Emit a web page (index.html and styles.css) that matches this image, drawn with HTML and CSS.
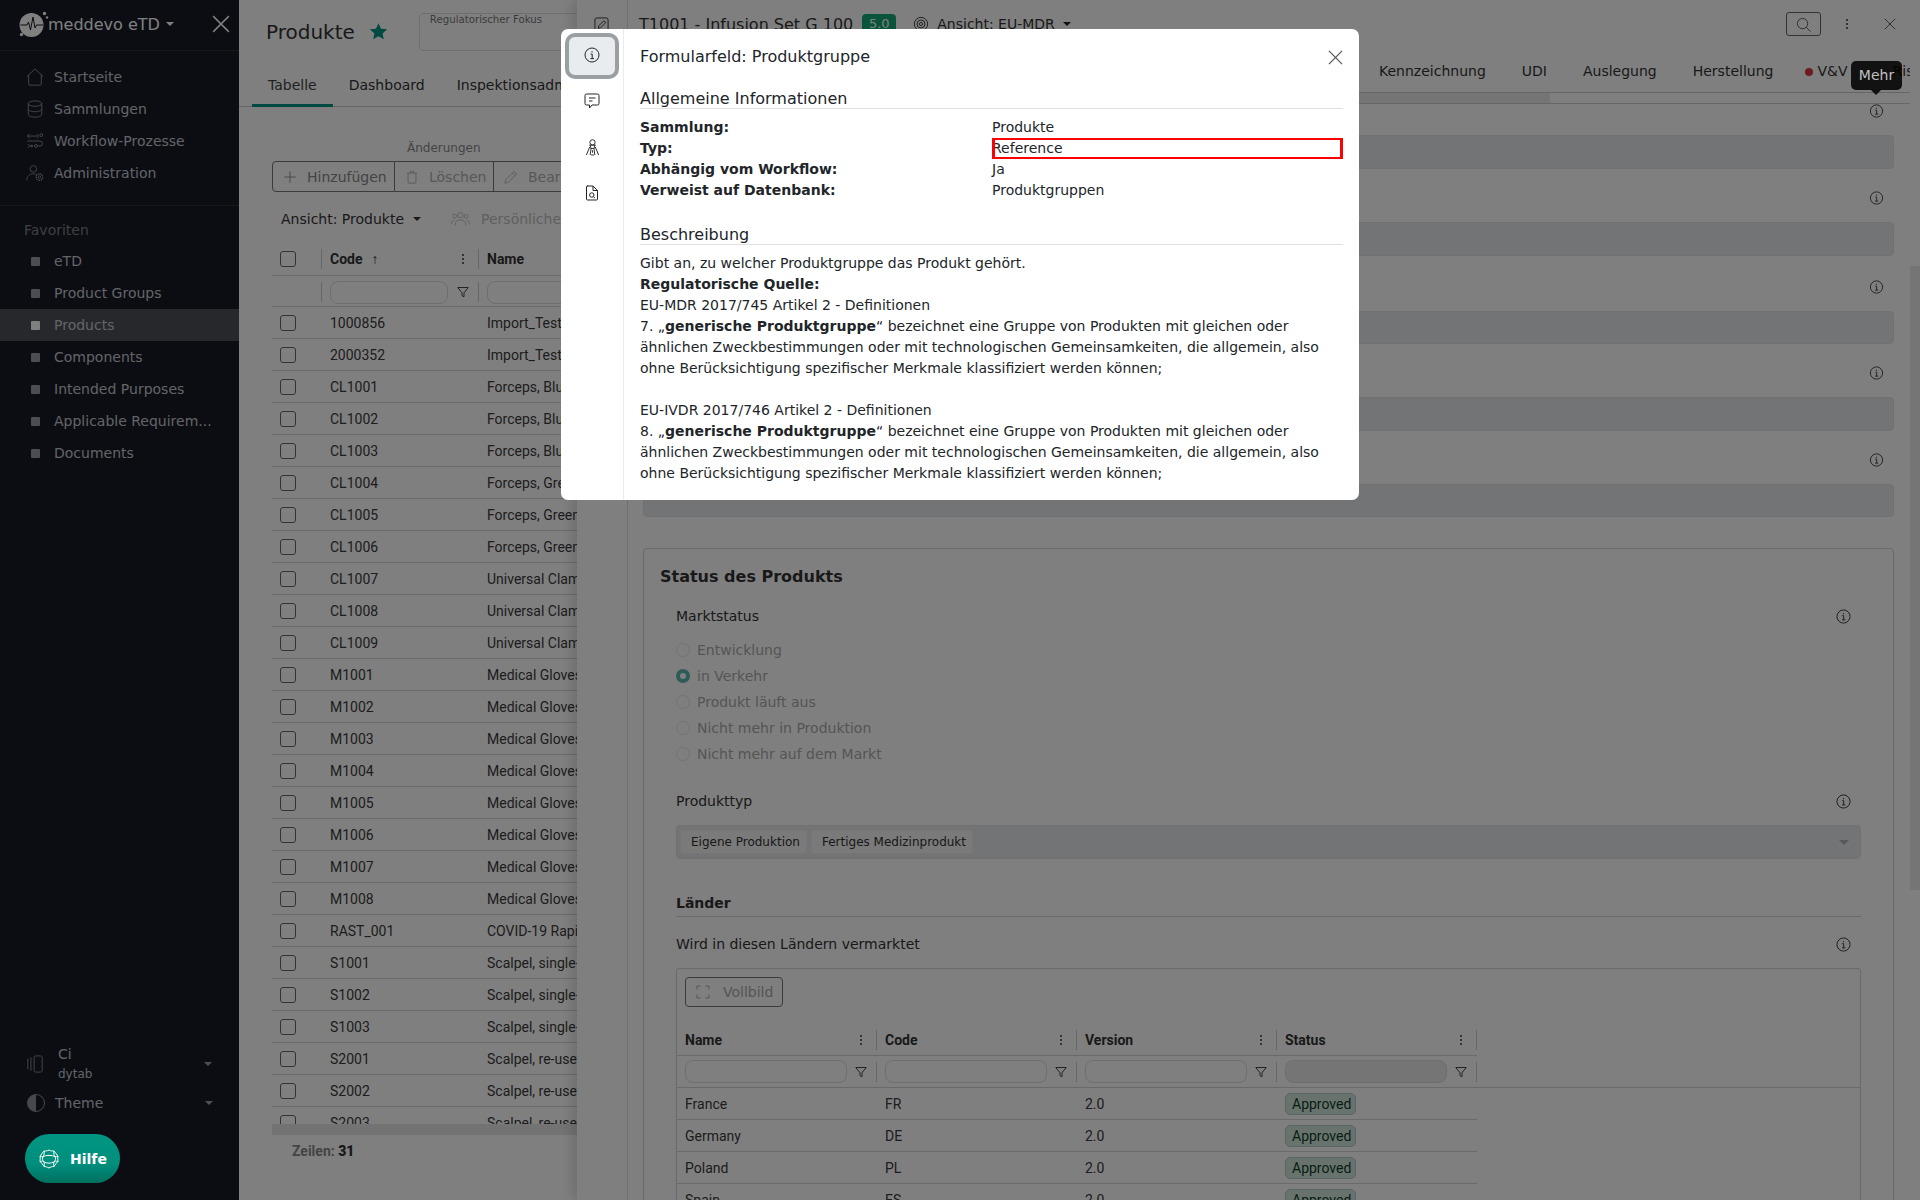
FILE: index.html
```html
<!DOCTYPE html>
<html lang="de">
<head>
<meta charset="UTF-8">
<title>Produkte - meddevo eTD</title>
<link rel="stylesheet" href="styles.css">
</head>
<body>
<svg class="sprite" aria-hidden="true">
  <symbol id="i-info" viewBox="0 0 16 16"><circle cx="8" cy="8" r="7"/><path d="M6.6 7.1H8.2V11.6M6.4 11.6H10"/><path d="M8 4.3v1.3"/></symbol>
  <symbol id="i-home" viewBox="0 0 20 20"><path d="M1 9.5 10 1l9 8.5M3 7.5V18a1 1 0 0 0 1 1h12a1 1 0 0 0 1-1V7.5"/></symbol>
  <symbol id="i-db" viewBox="0 0 20 20"><ellipse cx="10" cy="4" rx="7.5" ry="3"/><path d="M2.500 4v12c0 1.700 3.400 3 7.500 3s7.500-1.300 7.500-3V4M2.500 10c0 1.700 3.400 3 7.500 3s7.500-1.300 7.500-3"/></symbol>
  <symbol id="i-flow" viewBox="0 0 20 20"><path d="M2 4.500h10M4 2 1.500 4.500 4 7M12 2l2 2.500L12 7"/><circle cx="17" cy="3.500" r="1.600"/><path d="M1.500 10h14a2.500 2.500 0 0 1 0 5.500H13"/><circle cx="11" cy="15.500" r="1.600"/><path d="M2 13.500l2 2-2 2M6 15.500H4"/><circle cx="6.500" cy="15.500" r="1"/></symbol>
  <symbol id="i-admin" viewBox="0 0 22 20"><circle cx="9" cy="5" r="4"/><path d="M1 19c0-5 3-8 8-8 1.500 0 2.700.3 3.700.8"/><circle cx="16.500" cy="15" r="1.500"/><path stroke-dasharray="1.800 .9" stroke-width="1.500" d="M16.500 11a4 4 0 1 0 .01 0"/></symbol>
  <symbol id="i-side" viewBox="0 0 18 20"><path d="M1 4v12M4.500 2.500v15"/><rect x="8" y="1" width="9" height="18" rx="2"/></symbol>
  <symbol id="i-globe" viewBox="0 0 20 20"><path d="M10 1c2 1 3 1 5 1 1.500 2 3 3.500 4 5.500-.5 2 0 3.500 0 5-1.500 1.500-3 3-4 5-2 0-3.500.5-5 1.500-2-1-3.500-1.500-5-1.500-1-2-2.500-3.500-4-5 0-1.500.5-3 0-5C2 5.500 3.500 4 5 2c2 0 3 0 5-1Z"/><path d="M5 2c.5 3 0 4-1 5.500-1 .5-2 0-3 0M15 2c-.5 3 0 4 1 5.500 1 .5 2 0 3 0M1 12.500c2-.5 3-.5 4 .5 .5 1.500.5 3 0 4.500M19 12.500c-2-.5-3-.5-4 .5-.5 1.500-.5 3 0 4.500M4 7.500C7 6 13 6 16 7.500c1 2 .5 4-1 5.500-3 1.500-7 1.500-10 0C3.500 11.500 3 9.500 4 7.500Z"/></symbol>
  <symbol id="i-plus" viewBox="0 0 16 16"><path d="M8 1.500v13M1.500 8h13"/></symbol>
  <symbol id="i-trash" viewBox="0 0 16 16"><path d="M2 3.500h12M6 3.500V1.500h4v2M3.500 3.500V14a1 1 0 0 0 1 1h7a1 1 0 0 0 1-1V3.500"/></symbol>
  <symbol id="i-pen" viewBox="0 0 16 16"><path d="M11.500 1.500l3 3L5 14l-4 1 1-4 9.500-9.500ZM9.500 3.500l3 3"/></symbol>
  <symbol id="i-people" viewBox="0 0 20 16"><circle cx="10" cy="4" r="2.800"/><circle cx="4" cy="5" r="2"/><circle cx="16" cy="5" r="2"/><path d="M4.500 15v-2c0-2.500 2.500-4 5.500-4s5.500 1.500 5.500 4v2M.5 13c0-2 1-3.500 3-4M19.500 13c0-2-1-3.500-3-4"/></symbol>
  <symbol id="i-funnel" viewBox="0 0 12 12"><path d="M.8 1.500h10.400L7 6.800v4L5 9.600V6.800L.8 1.500Z"/></symbol>
  <symbol id="i-eye" viewBox="0 0 18 18"><circle cx="9" cy="9" r="7.500"/><circle cx="9" cy="9" r="4.500"/><circle cx="9" cy="9" r="1.800"/></symbol>
  <symbol id="i-edit" viewBox="0 0 16 16"><rect x="1" y="1" width="14" height="14" rx="2"/><path d="M10.500 4l2 2-5.500 5.500-2.500.5.500-2.500L10.500 4Z"/></symbol>
  <symbol id="i-search" viewBox="0 0 16 16"><circle cx="7" cy="7" r="5.500"/><path d="M11 11l4.500 4.500"/></symbol>
  <symbol id="i-x" viewBox="0 0 16 16"><path d="M1 1l14 14M15 1 1 15"/></symbol>
  <symbol id="i-chat" viewBox="0 0 16 16"><path d="M2.500 1h11A1.500 1.500 0 0 1 15 2.500v8a1.500 1.500 0 0 1-1.500 1.500H8l-2.500 3v-3h-3A1.500 1.500 0 0 1 1 10.500v-8A1.500 1.500 0 0 1 2.500 1Z"/><path d="M5 5h6.500M5 8h3.500"/></symbol>
  <symbol id="i-insp" viewBox="0 0 16 18"><circle cx="8" cy="3.500" r="2.800"/><path d="M4.500 6.500h7M5.700 6.500 6.200 10h3.600l.5-3.500M5 8.500 1.500 17M11 8.500l3.500 8.500M6.500 10 5.500 17M9.500 10l1 7M8 12v2.500M6.500 17h3"/></symbol>
  <symbol id="i-doc" viewBox="0 0 16 16"><path d="M3 1h6l4.500 4.500V14a1 1 0 0 1-1 1h-9a1 1 0 0 1-1-1V2a1 1 0 0 1 1-1ZM9 1v4.500h4.500"/><circle cx="7.800" cy="10" r="2.200"/><path d="M9.400 11.600l1.600 1.600"/></symbol>
  <symbol id="i-full" viewBox="0 0 14 14"><path d="M1 4.500V1h3.500M9.500 1H13v3.500M13 9.500V13H9.500M4.500 13H1V9.500"/></symbol>
</svg>

<div class="app">
  <aside class="sidebar">
    <div class="brand">
      <svg class="logo" viewBox="0 0 30 26"><circle class="logo-disc" cx="12.500" cy="14" r="12"/><path class="logo-pulse" d="M1.500 14h6.500l1.500-3 2 8 2.500-13 2 11 1.500-3h6.500"/><circle class="logo-dot" cx="25.500" cy="2.500" r="1.700"/><circle class="logo-dot" cx="28" cy="6.500" r="1.200"/><circle class="logo-dot" cx="2.500" cy="23.500" r="1.700"/></svg>
      <span class="brand-name">meddevo eTD</span>
      <span class="caret"></span>
      <svg class="brand-x"><use href="#i-x"/></svg>
    </div>
    <nav class="nav">
      <a class="nav-item"><svg class="nav-ico"><use href="#i-home"/></svg>Startseite</a>
      <a class="nav-item"><svg class="nav-ico"><use href="#i-db"/></svg>Sammlungen</a>
      <a class="nav-item"><svg class="nav-ico"><use href="#i-flow"/></svg>Workflow-Prozesse</a>
      <a class="nav-item"><svg class="nav-ico"><use href="#i-admin"/></svg>Administration</a>
    </nav>
    <div class="fav-title">Favoriten</div>
    <div class="favs">
      <a class="fav"><i></i>eTD</a>
      <a class="fav"><i></i>Product Groups</a>
      <a class="fav active"><i></i>Products</a>
      <a class="fav"><i></i>Components</a>
      <a class="fav"><i></i>Intended Purposes</a>
      <a class="fav"><i></i>Applicable Requirem...</a>
      <a class="fav"><i></i>Documents</a>
    </div>
    <div class="side-foot">
      <div class="user">
        <svg class="nav-ico"><use href="#i-side"/></svg>
        <div class="user-text"><div class="user-name">Ci</div><div class="user-org">dytab</div></div>
        <span class="caret"></span>
      </div>
      <div class="theme">
        <span class="theme-ico"></span>
        <span class="theme-name">Theme</span>
        <span class="caret"></span>
      </div>
    </div>
  </aside>

  <main class="main">
    <div class="page-head">
      <h1 class="page-title">Produkte</h1>
      <svg class="star" viewBox="0 0 24 24"><path d="M12 1.500l3.200 7 7.600.8-5.700 5.100 1.600 7.500-6.700-3.900-6.700 3.900 1.600-7.500L1.200 9.300l7.600-.8z"/></svg>
      <div class="focus-box">Regulatorischer Fokus</div>
    </div>
    <div class="tabs">
      <a class="tab active">Tabelle</a>
      <a class="tab">Dashboard</a>
      <a class="tab">Inspektionsadministration</a>
    </div>
    <div class="tool-label">Änderungen</div>
    <div class="btn-group">
      <button class="seg seg-on"><svg><use href="#i-plus"/></svg>Hinzufügen</button>
      <button class="seg"><svg><use href="#i-trash"/></svg>Löschen</button>
      <button class="seg seg-last"><svg><use href="#i-pen"/></svg>Bearbeiten</button>
    </div>
    <div class="view-row">
      <span class="view-name">Ansicht: Produkte</span><span class="caret"></span>
      <svg class="people"><use href="#i-people"/></svg>
      <span class="view-own">Persönliche Ansicht</span>
    </div>
    <div class="grid">
      <div class="g-row g-head">
        <div class="g-check"><span class="check"></span></div>
        <div class="g-cell">Code <span class="sort">↑</span><span class="dots"></span></div>
        <div class="g-cell">Name</div>
      </div>
      <div class="g-row g-filter">
        <div class="g-check"></div>
        <div class="g-cell"><span class="g-input"></span><svg class="funnel"><use href="#i-funnel"/></svg></div>
        <div class="g-cell"><span class="g-input"></span></div>
      </div>
      <div class="g-body">
        <div class="g-row"><div class="g-check"><span class="check"></span></div><div class="g-cell">1000856</div><div class="g-cell">Import_Test_Product</div></div>
        <div class="g-row"><div class="g-check"><span class="check"></span></div><div class="g-cell">2000352</div><div class="g-cell">Import_Test_Product</div></div>
        <div class="g-row"><div class="g-check"><span class="check"></span></div><div class="g-cell">CL1001</div><div class="g-cell">Forceps, Blue</div></div>
        <div class="g-row"><div class="g-check"><span class="check"></span></div><div class="g-cell">CL1002</div><div class="g-cell">Forceps, Blue</div></div>
        <div class="g-row"><div class="g-check"><span class="check"></span></div><div class="g-cell">CL1003</div><div class="g-cell">Forceps, Blue</div></div>
        <div class="g-row"><div class="g-check"><span class="check"></span></div><div class="g-cell">CL1004</div><div class="g-cell">Forceps, Green</div></div>
        <div class="g-row"><div class="g-check"><span class="check"></span></div><div class="g-cell">CL1005</div><div class="g-cell">Forceps, Green</div></div>
        <div class="g-row"><div class="g-check"><span class="check"></span></div><div class="g-cell">CL1006</div><div class="g-cell">Forceps, Green</div></div>
        <div class="g-row"><div class="g-check"><span class="check"></span></div><div class="g-cell">CL1007</div><div class="g-cell">Universal Clamp</div></div>
        <div class="g-row"><div class="g-check"><span class="check"></span></div><div class="g-cell">CL1008</div><div class="g-cell">Universal Clamp</div></div>
        <div class="g-row"><div class="g-check"><span class="check"></span></div><div class="g-cell">CL1009</div><div class="g-cell">Universal Clamp</div></div>
        <div class="g-row"><div class="g-check"><span class="check"></span></div><div class="g-cell">M1001</div><div class="g-cell">Medical Gloves</div></div>
        <div class="g-row"><div class="g-check"><span class="check"></span></div><div class="g-cell">M1002</div><div class="g-cell">Medical Gloves</div></div>
        <div class="g-row"><div class="g-check"><span class="check"></span></div><div class="g-cell">M1003</div><div class="g-cell">Medical Gloves</div></div>
        <div class="g-row"><div class="g-check"><span class="check"></span></div><div class="g-cell">M1004</div><div class="g-cell">Medical Gloves</div></div>
        <div class="g-row"><div class="g-check"><span class="check"></span></div><div class="g-cell">M1005</div><div class="g-cell">Medical Gloves</div></div>
        <div class="g-row"><div class="g-check"><span class="check"></span></div><div class="g-cell">M1006</div><div class="g-cell">Medical Gloves</div></div>
        <div class="g-row"><div class="g-check"><span class="check"></span></div><div class="g-cell">M1007</div><div class="g-cell">Medical Gloves</div></div>
        <div class="g-row"><div class="g-check"><span class="check"></span></div><div class="g-cell">M1008</div><div class="g-cell">Medical Gloves</div></div>
        <div class="g-row"><div class="g-check"><span class="check"></span></div><div class="g-cell">RAST_001</div><div class="g-cell">COVID-19 Rapid Test</div></div>
        <div class="g-row"><div class="g-check"><span class="check"></span></div><div class="g-cell">S1001</div><div class="g-cell">Scalpel, single-use</div></div>
        <div class="g-row"><div class="g-check"><span class="check"></span></div><div class="g-cell">S1002</div><div class="g-cell">Scalpel, single-use</div></div>
        <div class="g-row"><div class="g-check"><span class="check"></span></div><div class="g-cell">S1003</div><div class="g-cell">Scalpel, single-use</div></div>
        <div class="g-row"><div class="g-check"><span class="check"></span></div><div class="g-cell">S2001</div><div class="g-cell">Scalpel, re-use</div></div>
        <div class="g-row"><div class="g-check"><span class="check"></span></div><div class="g-cell">S2002</div><div class="g-cell">Scalpel, re-use</div></div>
        <div class="g-row"><div class="g-check"><span class="check"></span></div><div class="g-cell">S2003</div><div class="g-cell">Scalpel, re-use</div></div>
      </div>
      <div class="g-scroll"></div>
      <div class="g-foot"><span>Zeilen:</span> <b>31</b></div>
    </div>
  </main>
</div>

<!-- detail drawer, slides in over the table -->
<section class="drawer">
  <div class="rail"><svg class="rail-edit"><use href="#i-edit"/></svg></div>
  <div class="drawer-main">
    <div class="drawer-head">
      <span class="drawer-title">T1001 - Infusion Set G 100</span>
      <span class="version">5.0</span>
      <svg class="eye"><use href="#i-eye"/></svg>
      <span class="drawer-view">Ansicht: EU-MDR</span><span class="caret"></span>
      <span class="search-btn"><svg><use href="#i-search"/></svg></span>
      <span class="dots head-dots"></span>
      <svg class="head-x"><use href="#i-x"/></svg>
    </div>
    <div class="d-tabs">
      <a>Kennzeichnung</a><a>UDI</a><a>Auslegung</a><a>Herstellung</a><a class="d-tab-vv"><i></i>V&amp;V</a><a class="d-tab-more">Risiko</a>
    </div>
    <div class="d-hscroll"><div class="d-hthumb"></div></div>
    <div class="d-body">
      <div class="form">
        <div class="field"><svg class="info"><use href="#i-info"/></svg><div class="ro-input"></div></div>
        <div class="field"><svg class="info"><use href="#i-info"/></svg><div class="ro-input"></div></div>
        <div class="field"><svg class="info"><use href="#i-info"/></svg><div class="ro-input"></div></div>
        <div class="field"><svg class="info"><use href="#i-info"/></svg><div class="ro-input"></div></div>
        <div class="field"><svg class="info"><use href="#i-info"/></svg><div class="ro-input"></div></div>

        <div class="card">
          <h2 class="card-title">Status des Produkts</h2>
          <div class="card-body">
            <div class="lbl-row"><span>Marktstatus</span><svg class="info"><use href="#i-info"/></svg></div>
            <div class="radios">
              <div class="radio"><i></i>Entwicklung</div>
              <div class="radio on"><i></i>in Verkehr</div>
              <div class="radio"><i></i>Produkt läuft aus</div>
              <div class="radio"><i></i>Nicht mehr in Produktion</div>
              <div class="radio"><i></i>Nicht mehr auf dem Markt</div>
            </div>
            <div class="lbl-row lbl-type"><span>Produkttyp</span><svg class="info"><use href="#i-info"/></svg></div>
            <div class="multi">
              <span class="chip">Eigene Produktion</span>
              <span class="chip">Fertiges Medizinprodukt</span>
              <span class="caret multi-caret"></span>
            </div>
            <div class="sub-title">Länder</div>
            <div class="lbl-row lbl-land"><span>Wird in diesen Ländern vermarktet</span><svg class="info"><use href="#i-info"/></svg></div>
            <div class="sub-grid">
              <button class="full-btn"><svg><use href="#i-full"/></svg>Vollbild</button>
              <div class="s-row s-head">
                <div>Name<span class="dots"></span></div><div>Code<span class="dots"></span></div><div>Version<span class="dots"></span></div><div>Status<span class="dots"></span></div>
              </div>
              <div class="s-row s-filter">
                <div><span class="g-input"></span><svg class="funnel"><use href="#i-funnel"/></svg></div>
                <div><span class="g-input"></span><svg class="funnel"><use href="#i-funnel"/></svg></div>
                <div><span class="g-input"></span><svg class="funnel"><use href="#i-funnel"/></svg></div>
                <div><span class="g-input off"></span><svg class="funnel"><use href="#i-funnel"/></svg></div>
              </div>
              <div class="s-row"><div>France</div><div>FR</div><div>2.0</div><div><span class="ok">Approved</span></div></div>
              <div class="s-row"><div>Germany</div><div>DE</div><div>2.0</div><div><span class="ok">Approved</span></div></div>
              <div class="s-row"><div>Poland</div><div>PL</div><div>2.0</div><div><span class="ok">Approved</span></div></div>
              <div class="s-row"><div>Spain</div><div>ES</div><div>2.0</div><div><span class="ok">Approved</span></div></div>
            </div>
          </div>
        </div>
      </div>
      <div class="d-vscroll"><div class="d-vthumb"></div></div>
    </div>
  </div>
</section>

<div class="backdrop"></div>

<div class="tooltip">Mehr</div>

<a class="help"><svg><use href="#i-globe"/></svg>Hilfe</a>

<div class="modal">
  <div class="m-rail">
    <span class="m-btn active"><svg><use href="#i-info"/></svg></span>
    <span class="m-btn"><svg><use href="#i-chat"/></svg></span>
    <span class="m-btn"><svg class="m-insp"><use href="#i-insp"/></svg></span>
    <span class="m-btn"><svg><use href="#i-doc"/></svg></span>
  </div>
  <div class="m-main">
    <div class="m-head">
      <h3 class="m-title">Formularfeld: Produktgruppe</h3>
      <svg class="m-x"><use href="#i-x"/></svg>
    </div>
    <h4 class="m-sec">Allgemeine Informationen</h4>
    <dl class="m-facts">
      <dt>Sammlung:</dt><dd>Produkte</dd>
      <dt>Typ:</dt><dd class="marked">Reference</dd>
      <dt>Abhängig vom Workflow:</dt><dd>Ja</dd>
      <dt>Verweist auf Datenbank:</dt><dd>Produktgruppen</dd>
    </dl>
    <h4 class="m-sec m-sec-desc">Beschreibung</h4>
    <div class="m-desc">
      Gibt an, zu welcher Produktgruppe das Produkt gehört.<br>
      <b>Regulatorische Quelle:</b><br>
      EU-MDR 2017/745 Artikel 2 - Definitionen<br>
      7. „<b>generische Produktgruppe</b>“ bezeichnet eine Gruppe von Produkten mit gleichen oder ähnlichen Zweckbestimmungen oder mit technologischen Gemeinsamkeiten, die allgemein, also ohne Berücksichtigung spezifischer Merkmale klassifiziert werden können;<br>
      <br>
      EU-IVDR 2017/746 Artikel 2 - Definitionen<br>
      8. „<b>generische Produktgruppe</b>“ bezeichnet eine Gruppe von Produkten mit gleichen oder ähnlichen Zweckbestimmungen oder mit technologischen Gemeinsamkeiten, die allgemein, also ohne Berücksichtigung spezifischer Merkmale klassifiziert werden können;
    </div>
  </div>
</div>
</body>
</html>
```
FILE: styles.css
```css
:root {
  font-family: "DejaVu Sans", sans-serif;
  font-size: 14px;
  color: #212529;
}
* {
  box-sizing: border-box;
}
html, body {
  margin: 0;
  height: 1200px;
  overflow: hidden;
  background: #fff;
}
h1, h2, h3, h4, dl, dd {
  margin: 0;
  font-weight: normal;
}
button {
  font: inherit;
  background: none;
}
svg {
  fill: none;
  stroke: currentColor;
  stroke-width: 1;
}
.sprite {
  width: 0;
  height: 0;
  display: block;
}
.caret {
  display: inline-block;
  width: 0;
  height: 0;
  border: 4.500px solid transparent;
  border-top-color: currentColor;
  border-bottom: 0;
}
.dots {
  width: 2px;
  height: 2px;
  border-radius: 50%;
  background: #333;
  box-shadow: 0 -4px 0 #333, 0 4px 0 #333;
  display: inline-block;
}

.app {
  display: flex;
  height: 1200px;
}

/* sidebar */
.sidebar {
  width: 239px;
  flex: none;
  background: #161a26;
  color: #c4c8d0;
  display: flex;
  flex-direction: column;
}
.brand {
  height: 51px;
  border-bottom: 1px solid #2c3038;
  display: flex;
  align-items: center;
  padding: 0 9px 2px 19px;
  color: #fff;
}
.logo {
  width: 30px;
  height: 26px;
  margin-right: -1px;
  flex: none;
}
.logo-disc { fill: #fff; stroke: none; }
.logo-pulse { stroke: #161a26; stroke-width: 1; }
.logo-dot { fill: #fff; stroke: none; }
.brand-name {
  font-size: 16px;
  color: #fff;
  margin-left: 0;
}
.brand .caret {
  margin-left: 6px;
  border-width: 4px;
  border-bottom: 0;
}
.brand-x {
  width: 18px;
  height: 18px;
  margin-left: auto;
  stroke-width: 1.300;
}
.nav {
  padding: 10px 0 16px;
  border-bottom: 1px solid #2c3038;
}
.nav-item {
  height: 32px;
  display: flex;
  align-items: center;
  padding-left: 26px;
  gap: 10px;
}
.nav-ico {
  width: 18px;
  height: 18px;
  flex: none;
  color: #9096a0;
}
.fav-title {
  margin: 14px 0 5px 24px;
  line-height: 20px;
  color: #7c8088;
}
.fav {
  height: 32px;
  display: flex;
  align-items: center;
  padding-left: 31px;
  gap: 14px;
}
.fav i {
  width: 9px;
  height: 9px;
  border-radius: 1px;
  background: #959aa5;
}
.fav.active {
  background: #4e5157;
}
.fav.active i {
  background: #fff;
}
.side-foot {
  margin-top: auto;
  padding: 0 0 81px 26px;
}
.user {
  height: 40px;
  display: flex;
  align-items: center;
  padding-right: 27px;
}
.user .caret, .theme .caret {
  margin-left: auto;
  color: #9da1a8;
}
.user-text {
  margin-left: 14px;
}
.user-name {
  font-size: 14px;
  line-height: 20px;
}
.user-org {
  font-size: 12px;
  line-height: 20px;
}
.theme {
  margin-top: 3px;
  height: 32px;
  display: flex;
  align-items: center;
  padding-right: 26px;
}
.theme-ico {
  width: 18px;
  height: 18px;
  margin-left: 1px;
  border-radius: 50%;
  border: 1.500px solid #8d919b;
  background: linear-gradient(90deg, #8d919b 50%, transparent 50%);
}
.theme-name {
  margin-left: 10px;
}

/* table page */
.main {
  flex: 1;
  min-width: 0;
  overflow: hidden;
}
.page-head {
  display: flex;
  align-items: flex-start;
  padding: 13px 0 0 27px;
  height: 66px;
}
.page-title {
  font-size: 20px;
  line-height: 38px;
  color: #333;
}
.star {
  width: 19px;
  height: 19px;
  margin: 9px 0 0 14px;
  fill: #009485;
  stroke: none;
}
.focus-box {
  width: 210px;
  flex: none;
  height: 38px;
  margin-left: 31px;
  border: 1px solid #dadde2;
  border-radius: 5px;
  padding: 0 0 0 10px;
  font-size: 10.200px;
  line-height: 12px;
  color: #777;
}
.tabs {
  display: flex;
  padding-left: 13px;
  height: 41px;
  width: 800px;
  border-bottom: 1px solid #ccc;
}
.tab {
  padding: 10px 16px 0;
  line-height: 18px;
  height: 41px;
  color: #333;
  white-space: nowrap;
}
.tab.active {
  border-bottom: 3px solid #009485;
  color: #444;
}
.tool-label {
  margin: 33px 0 0 168px;
  font-size: 12px;
  line-height: 16px;
  color: #888;
}
.btn-group {
  margin: 5px 0 0 33px;
  display: flex;
  height: 31px;
}
.seg {
  border: 1px solid #777;
  border-left: 0;
  display: flex;
  align-items: center;
  gap: 10px;
  padding: 0 0 0 10px;
  color: #b0b0b0;
  white-space: nowrap;
  flex: none;
  width: 99px;
}
.seg svg {
  width: 14px;
  height: 16px;
  flex: none;
}
.seg-on {
  width: 123px;
  border-left: 1px solid #777;
  border-radius: 4px 0 0 4px;
  color: #888;
}
.seg-last {
  width: 130px;
}
.view-row {
  margin: 17px 0 0 42px;
  height: 20px;
  display: flex;
  align-items: center;
  width: 400px;
  color: #333;
}
.view-row .caret {
  margin-left: 9px;
}
.people {
  width: 19px;
  height: 16px;
  margin-left: 30px;
  color: #c0c0c0;
}
.view-own {
  margin-left: 11px;
  color: #c0c0c0;
  white-space: nowrap;
}
.grid {
  margin: 16px 0 0 33px;
  font-family: Roboto, sans-serif;
  width: 540px;
}
.g-row {
  height: 32px;
  display: grid;
  grid-template-columns: 50px 157px 1fr;
  align-items: center;
  border-bottom: 1px solid #d4d4d4;
  color: #3a3a3a;
}
.g-head {
  height: 31px;
  padding-bottom: 2px;
  font-weight: bold;
  color: #333;
}
.g-filter {
  height: 31px;
  padding-top: 2px;
}
.g-check {
  padding-left: 8px;
  height: 100%;
  display: flex;
  align-items: center;
  border-right: 1px solid transparent;
}
.g-head .g-check, .g-filter .g-check {
  height: 20px;
  border-right-color: #ccc;
}
.check {
  width: 16px;
  height: 16px;
  border: 1px solid #666;
  border-radius: 3px;
  background: #fff;
}
.g-cell {
  padding-left: 8px;
  display: flex;
  align-items: center;
  white-space: nowrap;
}
.g-head .g-cell:nth-child(2), .g-filter .g-cell:nth-child(2) {
  height: 20px;
  border-right: 1px solid #ccc;
}
.sort {
  margin-left: 9px;
  font-size: 14px;
}
.g-head .dots {
  margin-left: auto;
  margin-right: 14px;
}
.g-input {
  display: block;
  width: 118px;
  height: 23px;
  flex: none;
  border: 1px solid #dcdcdc;
  border-radius: 8px;
  background: #fff;
}
.funnel {
  width: 12px;
  height: 12px;
  margin-left: 9px;
  flex: none;
  color: #333;
  stroke-width: .9;
}
.g-body {
  height: 817px;
  overflow: hidden;
}
.g-scroll {
  height: 11px;
  background: #e6e6e6;
}
.g-foot {
  padding: 7px 0 0 20px;
  line-height: 18px;
  font-weight: bold;
  color: #333;
}
.g-foot span {
  color: #888;
}

/* drawer */
.drawer {
  position: absolute;
  left: 577px;
  top: 0;
  right: 0;
  bottom: 0;
  background: #fff;
  display: flex;
  box-shadow: -6px 0 10px rgba(0, 0, 0, .12);
  overflow: hidden;
}
.rail {
  width: 51px;
  flex: none;
  border-right: 1px solid #ddd;
  padding: 17px 0 0 17px;
}
.rail-edit {
  width: 15px;
  height: 15px;
  color: #333;
}
.drawer-main {
  flex: 1;
  min-width: 0;
  display: flex;
  flex-direction: column;
}
.drawer-head {
  height: 48px;
  flex: none;
  display: flex;
  align-items: center;
  padding-left: 11px;
}
.drawer-title {
  font-size: 16px;
  color: #333;
}
.version {
  margin-left: 9px;
  width: 34px;
  height: 20px;
  border-radius: 4px;
  background: #16a878;
  color: #fff;
  font-size: 13px;
  text-align: center;
  line-height: 20px;
}
.eye {
  width: 16px;
  height: 16px;
  margin-left: 17px;
  color: #333;
}
.drawer-view {
  margin-left: 8px;
  color: #333;
}
.drawer-head .caret {
  margin-left: 8px;
  border-width: 4px;
  border-bottom: 0;
}
.search-btn {
  margin-left: auto;
  width: 35px;
  height: 24px;
  border: 1px solid #666;
  border-radius: 3px;
  display: flex;
  align-items: center;
  justify-content: center;
  color: #555;
}
.search-btn svg {
  width: 15px;
  height: 15px;
}
.head-dots {
  margin-left: 25px;
}
.head-x {
  width: 12px;
  height: 12px;
  margin: 0 24px 0 36px;
  color: #333;
}
.d-tabs {
  height: 45px;
  width: 1282px;
  flex: none;
  display: flex;
  gap: 36px;
  align-items: center;
  padding: 2px 0 0 751px;
  border-bottom: 1px solid #ccc;
  color: #333;
  overflow: hidden;
  white-space: nowrap;
}
.d-tab-more {
  margin-left: 9px;
}
.d-tab-vv i {
  display: inline-block;
  width: 8px;
  height: 8px;
  border-radius: 50%;
  background: #dc3545;
  margin-right: 4px;
}
.d-tab-vv {
  margin-left: -4px;
}
.d-hscroll {
  height: 11px;
  width: 1282px;
  flex: none;
  border-bottom: 1px solid #ccc;
}
.d-hthumb {
  width: 922px;
  height: 10px;
  background: #eaeaea;
}
.d-body {
  flex: 1;
  min-height: 0;
  display: flex;
  overflow: hidden;
}
.form {
  width: 1282px;
  flex: none;
  padding: 0 16px 0 15px;
}
.d-vscroll {
  flex: 1;
}
.d-vthumb {
  margin-top: 162px;
  height: 624px;
  background: #ebebeb;
}
.field {
  margin-bottom: 22px;
  display: flex;
  flex-direction: column;
}
.field:nth-child(2) {
  margin-bottom: 24px;
}
.field:nth-child(3) .ro-input, .field:nth-child(5) .ro-input {
  height: 33px;
}
.info {
  width: 15px;
  height: 15px;
  flex: none;
  color: #333;
}
.field .info {
  align-self: flex-end;
  margin-right: 10px;
  height: 14px;
}
.ro-input {
  margin-top: 17px;
  height: 34px;
  border: 1px solid #dee2e6;
  border-radius: 4px;
  background: #e7e9ec;
}
.field:nth-child(5) {
  margin-bottom: 31px;
}
.card {
  border: 1px solid #d4d4d4;
  border-radius: 4px 4px 0 0;
  padding: 16px 32px 0 16px;
  height: 800px;
}
.card-title {
  font-size: 16px;
  line-height: 24px;
  font-weight: bold;
  color: #333;
}
.card-body {
  padding-left: 16px;
}
.lbl-row {
  margin-top: 17px;
  height: 20px;
  display: flex;
  align-items: center;
  justify-content: space-between;
  color: #333;
}
.lbl-row .info {
  margin-right: 10px;
}
.radios {
  margin-top: 11px;
}
.radio {
  height: 26px;
  display: flex;
  align-items: center;
  color: #aaa;
  gap: 7px;
}
.radio i {
  width: 14px;
  height: 14px;
  border-radius: 50%;
  border: 1px solid #e4e6e8;
  background: #fff;
}
.radio.on i {
  border: 4px solid #5bb8ad;
}
.lbl-type {
  margin-top: 24px;
}
.multi {
  margin-top: 14px;
  height: 34px;
  border: 1px solid #dee2e6;
  border-radius: 4px;
  background: #e7e9ec;
  display: flex;
  align-items: center;
  gap: 4px;
  padding: 0 11px 0 3px;
}
.chip {
  height: 24px;
  line-height: 22px;
  padding: 0 6px 0 10px;
  border: 1px solid #ebebeb;
  border-radius: 2px;
  background: #f5f5f5;
  font-size: 12px;
  color: #333;
}
.multi-caret {
  margin-left: auto;
  color: #b0b0b0;
  border-width: 5px 5.500px 0;
}
.sub-title {
  margin-top: 34px;
  line-height: 20px;
  padding-bottom: 3px;
  border-bottom: 1px solid #d4d4d4;
  font-weight: bold;
  color: #333;
}
.lbl-land {
  margin-top: 17px;
}
.sub-grid {
  margin-top: 14px;
  border: 1px solid #d4d4d4;
  border-radius: 3px 3px 0 0;
  padding-top: 8px;
  font-family: Roboto, sans-serif;
  color: #3a3a3a;
}
.full-btn {
  font-family: "DejaVu Sans", sans-serif;
  margin-left: 8px;
  width: 98px;
  height: 30px;
  border: 1px solid #777;
  border-radius: 4px;
  color: #aaa;
  display: flex;
  align-items: center;
  gap: 13px;
  padding: 0 0 0 10px;
}
.full-btn svg {
  width: 14px;
  height: 14px;
}
.s-row {
  width: 800px;
  height: 32px;
  display: grid;
  grid-template-columns: repeat(4, 200px);
  align-items: center;
  border-bottom: 1px solid #d4d4d4;
}
.s-row > div {
  padding-left: 8px;
  display: flex;
  align-items: center;
}
.s-head {
  margin-top: 17px;
  font-weight: bold;
  color: #333;
}
.s-head > div, .s-filter > div {
  height: 20px;
  border-right: 1px solid #ccc;
}
.s-head .dots {
  margin-left: auto;
  margin-right: 14px;
}
.s-filter {
  width: 100%;
  grid-template-columns: repeat(4, 200px) 1fr;
}
.s-filter .g-input {
  width: 162px;
}
.s-filter .funnel {
  margin-left: 8px;
}
.g-input.off {
  background: #ebebeb;
}
.ok {
  height: 22px;
  width: 71px;
  line-height: 20px;
  padding-left: 6px;
  border: 1px solid #b4cfbf;
  border-radius: 5px;
  background: #d1e7dd;
  color: #0f3d2a;
}

/* over the content */
.backdrop {
  position: absolute;
  left: 0;
  top: 0;
  right: 0;
  bottom: 0;
  background: rgba(0, 0, 0, .5);
}
.tooltip {
  position: absolute;
  left: 1851px;
  top: 61px;
  width: 51px;
  height: 29px;
  border-radius: 5px;
  background: #000;
  opacity: .85;
  color: #ccc;
  text-align: center;
  line-height: 29px;
}
.tooltip::after {
  content: "";
  position: absolute;
  left: 20px;
  top: 29px;
  border: 5px solid transparent;
  border-top-color: #000;
  border-bottom: 0;
}
.help {
  position: absolute;
  left: 25px;
  top: 1134px;
  width: 95px;
  height: 49px;
  border-radius: 25px;
  background: linear-gradient(180deg, #009682 0%, #008f7d 60%, #00705f 100%);
  color: #fff;
  font-weight: bold;
  display: flex;
  align-items: center;
  gap: 11px;
  padding-left: 14px;
}
.help svg {
  width: 20px;
  height: 20px;
}
.modal {
  position: absolute;
  left: 561px;
  top: 29px;
  width: 798px;
  height: 471px;
  background: #fff;
  border-radius: 7px;
  display: flex;
  overflow: hidden;
}
.m-rail {
  width: 63px;
  flex: none;
  border-right: 1px solid #e9ecef;
  padding: 8px 0 0 8px;
}
.m-btn {
  display: flex;
  align-items: center;
  justify-content: center;
  width: 46px;
  height: 38px;
  margin-bottom: 8px;
  color: #212529;
}
.m-btn svg {
  width: 16px;
  height: 16px;
  margin-bottom: 2px;
}
.m-btn .m-insp {
  width: 15px;
  height: 17px;
}
.m-btn.active {
  background: #e9ecef;
  border-radius: 6px;
  outline: 4px solid #9a9fa3;
}
.m-main {
  flex: 1;
  min-width: 0;
  padding: 0 16px;
}
.m-head {
  height: 55px;
  display: flex;
  align-items: center;
  justify-content: space-between;
}
.m-title {
  font-size: 16px;
  color: #212529;
}
.m-x {
  width: 15px;
  height: 15px;
  color: #555;
  margin-top: 1px;
  stroke-width: 1.300;
}
.m-sec {
  font-size: 16px;
  line-height: 22px;
  height: 21px;
  margin-top: 4px;
  border-bottom: 1px solid #dee2e6;
  color: #212529;
}
.m-facts {
  margin-top: 8px;
  display: grid;
  grid-template-columns: 352px 1fr;
  line-height: 21px;
}
.m-facts dt {
  font-weight: bold;
}
.marked {
  position: relative;
}
.marked::after {
  content: "";
  position: absolute;
  left: 0;
  top: 0;
  right: 0;
  bottom: 0;
  border: solid #f00;
  border-width: 2px 3px;
}
.m-sec-desc {
  margin-top: 23px;
}
.m-desc {
  margin-top: 8px;
  line-height: 21px;
}
```
